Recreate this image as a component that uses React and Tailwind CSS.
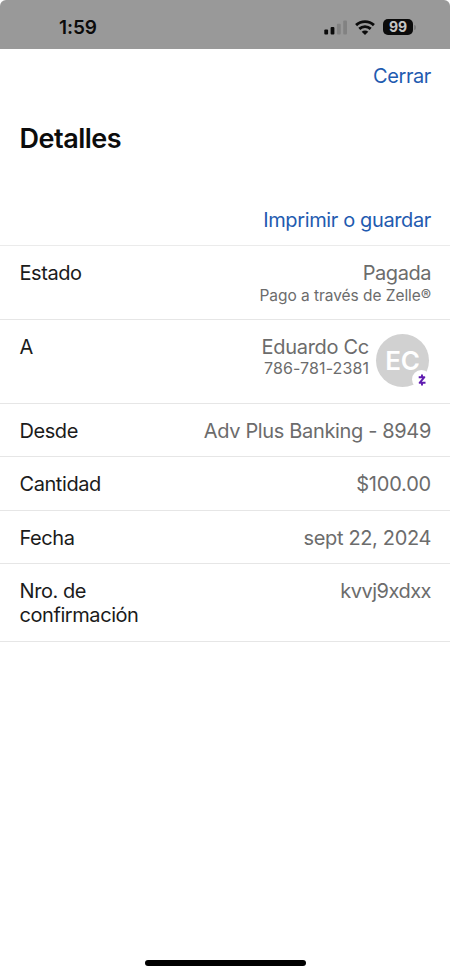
function StatusBar() {
  return (
    <header className="flex h-[49px] items-start justify-between rounded-t-[6px] bg-[#999999] pl-[59px] pr-[34px] pt-[15px]">
      <span className="pt-px text-[19px] font-semibold leading-6 tracking-[-0.1px] text-[#0b0b0b]">1:59</span>
      <div className="flex h-6 items-center">
        <svg width="24" height="15" viewBox="0 0 24 15" className="mr-[7px]">
          <rect x="0.3" y="9.6" width="3.8" height="5" rx="1" fill="#0b0b0b" />
          <rect x="6.6" y="7" width="3.8" height="7.6" rx="1" fill="#0b0b0b" />
          <rect x="12.9" y="3.8" width="3.8" height="10.8" rx="1" fill="#828282" />
          <rect x="19.2" y="0.6" width="3.8" height="14" rx="1" fill="#828282" />
        </svg>
        <svg width="20" height="15" viewBox="0 0 20 15" fill="none" className="mr-2" stroke="#0b0b0b" strokeWidth="2.9">
          <path d="M1.1 5.1C6 0.5 14 0.5 18.9 5.1" />
          <path d="M4.3 8.9C7.6 5.9 12.4 5.9 15.7 8.9" />
          <path d="M10 15L6.7 11.7C8.5 10.1 11.5 10.1 13.3 11.7Z" fill="#0b0b0b" stroke="none" />
        </svg>
        <span className="flex h-4 w-[30px] items-center justify-center rounded-[5px] bg-[#0b0b0b] text-[14px] font-bold leading-none text-[#c4c4c4]">99</span>
        <span className="ml-px h-[5px] w-[2px] rounded-r-full bg-[#7d7d7d]" />
      </div>
    </header>
  )
}

function Row({ label, className, children }) {
  return (
    <div className={`flex items-start justify-between border-b border-[#e6e6e6] pl-[19.5px] pr-[19px] ${className}`}>
      <dt className="w-[140px] text-[20px] leading-6 tracking-[-0.43px] text-[#1b1b1b]">{label}</dt>
      <dd className="text-right text-[20px] leading-6 text-[#6c6c6c]">{children}</dd>
    </div>
  )
}

function Avatar() {
  return (
    <div className="relative -mt-px ml-[7px] flex size-[53px] items-center justify-center rounded-full bg-[#d1d1d1]">
      <span className="pt-px text-[26px] font-semibold leading-none tracking-[-0.2px] text-white">EC</span>
      <span className="absolute left-[36px] top-[36px] flex size-[19px] items-center justify-center rounded-full bg-white">
        <svg width="10" height="14" viewBox="0 0 10 14" fill="none" stroke="#5f1bb0" strokeWidth="1.9">
          <path d="M1.7 4.2H7.4L2.6 9.8H8.5" strokeLinejoin="round" />
          <path d="M5 1.6V4M5 10V12.4" />
        </svg>
      </span>
    </div>
  )
}

export default function App() {
  return (
    <div className="bg-white">
      <main className="flex h-[976px] w-[450px] flex-col bg-white font-['Inter','Liberation_Sans',sans-serif]">
        <StatusBar />
        <div className="flex justify-end pr-[19px] pt-[15px]">
          <button className="text-[20px] leading-6 tracking-[-0.4px] text-[#1f5bb0]">Cerrar</button>
        </div>
        <h1 className="mt-[35px] pl-[19.5px] text-[27px] font-semibold leading-8 tracking-[-0.5px] text-[#0c0c0c]">Detalles</h1>
        <div className="mt-[53px] flex h-[38px] justify-end border-b border-[#ebebeb] pr-[19px]">
          <button className="self-start text-[20px] leading-6 tracking-[-0.37px] text-[#1f5bb0]">Imprimir o guardar</button>
        </div>
        <dl>
          <Row label="Estado" className="h-[74px] pt-[15px]">
            <p className="tracking-[-0.45px]">Pagada</p>
            <p className="pt-px text-[15.5px] leading-5 tracking-[-0.05px]">Pago a través de Zelle®</p>
          </Row>
          <Row label="A" className="h-[84px] pt-[15px]">
            <div className="flex pr-[2px]">
              <div>
                <p className="tracking-[-0.3px]">Eduardo Cc</p>
                <p className="-mt-px text-[16px] leading-5 tracking-[0.1px]">786-781-2381</p>
              </div>
              <Avatar />
            </div>
          </Row>
          <Row label="Desde" className="h-[53px] pt-[15px]">
            <span className="tracking-[-0.35px]">Adv Plus Banking - 8949</span>
          </Row>
          <Row label="Cantidad" className="h-[54px] pt-[15px]">
            <span className="tracking-[-0.2px]">$100.00</span>
          </Row>
          <Row label="Fecha" className="h-[53px] pt-[15px]">
            <span className="tracking-[-0.35px]">sept 22, 2024</span>
          </Row>
          <Row label="Nro. de confirmación" className="h-[78px] pt-[15px]">
            <span className="tracking-[-0.5px]">kvvj9xdxx</span>
          </Row>
        </dl>
        <div className="mb-[10px] ml-[145px] mt-auto h-[6px] w-[161px] rounded-full bg-black" />
      </main>
    </div>
  )
}
